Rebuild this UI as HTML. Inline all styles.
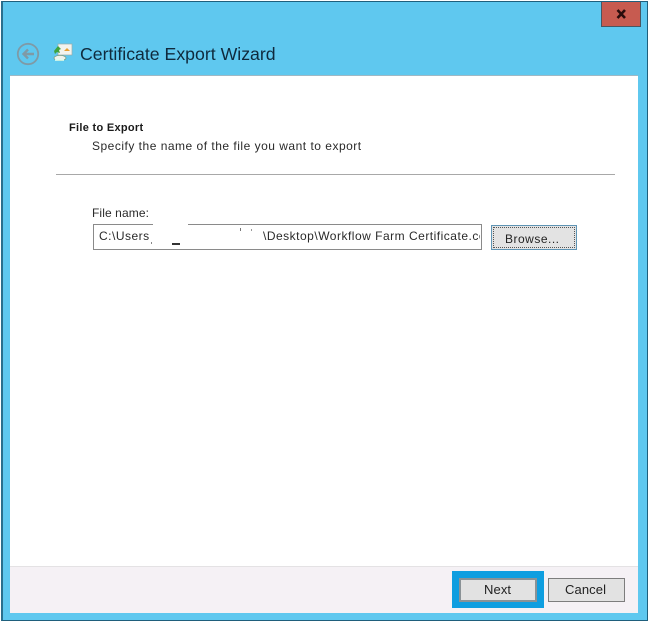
<!DOCTYPE html>
<html>
<head>
<meta charset="utf-8">
<style>
html,body{margin:0;padding:0;}
body{width:650px;height:623px;position:relative;overflow:hidden;background:#fff;font-family:"Liberation Sans",sans-serif;color:#222;}
div{position:absolute;box-sizing:border-box;white-space:nowrap;}
.t{font-size:12px;line-height:14px;letter-spacing:.5px;}
</style>
</head>
<body>
<div style="left:1px;top:1px;width:647px;height:620px;background:#5fc8ef;border:1px solid #1f5f7c;border-left:2px solid #2a6f8e;"></div>
<div style="left:601px;top:2px;width:40px;height:25px;background:#c75b50;border:1px solid #4a5560;border-top:0;"></div>
<svg style="position:absolute;left:615px;top:8px" width="13" height="12" viewBox="0 0 13 12"><path d="M2.5 2L10 10M10 2L2.5 10" stroke="#2a0c0c" stroke-width="2.6" fill="none"/></svg>

<svg style="position:absolute;left:15px;top:41px" width="26" height="26" viewBox="0 0 26 26"><circle cx="13" cy="13" r="10.2" fill="none" stroke="#7f9aa6" stroke-width="1.8"/><path d="M19 13H9M13 8.5L8.5 13L13 17.5" fill="none" stroke="#7f9aa6" stroke-width="2.4"/></svg>
<svg style="position:absolute;left:52px;top:42px" width="22" height="22" viewBox="0 0 22 22"><rect x="6" y="2" width="14" height="11" fill="#f3f3ee" stroke="#9aa" stroke-width=".7"/><path d="M12 9l3-3 3 3z" fill="#e8a032"/><path d="M6 4l3 3-2 1 1 3-3-1-2 2-1-3z" fill="#3fa33f"/><ellipse cx="8" cy="16" rx="6" ry="2.6" fill="#eef3ee" stroke="#7a9a7a" stroke-width=".7"/><path d="M3 18h9" stroke="#dfe" stroke-width="1.6"/></svg>
<div style="left:80px;top:43px;font-size:17.7px;line-height:22px;color:#0f2a3d;">Certificate Export Wizard</div>

<div style="left:10px;top:75px;width:628px;height:538px;background:#fff;border-top:1px solid #9fb8c4;"></div>
<div style="left:10px;top:566px;width:628px;height:47px;background:#f5f1f5;border-top:1px solid #e4e2e4;"></div>

<div class="t" style="left:69px;top:121px;font-size:11px;font-weight:bold;color:#1a1a1a;letter-spacing:.3px;">File to Export</div>
<div class="t" style="left:92px;top:139px;color:#2a2a2a;">Specify the name of the file you want to export</div>
<div style="left:56px;top:174px;width:559px;height:1px;background:#a8a8a8;"></div>

<div class="t" style="left:92px;top:206px;color:#2a2a2a;letter-spacing:.1px;">File name:</div>
<div style="left:93px;top:224px;width:389px;height:26px;background:#fff;border:1px solid #8a8a8a;"></div>
<div style="left:153px;top:222px;width:35px;height:5px;background:#fff;"></div>
<div class="t" style="left:99px;top:229px;color:#2a2a2a;">C:\Users</div>
<div style="left:172px;top:243px;width:8px;height:2px;background:#333;"></div>
<div style="left:151px;top:242px;width:1px;height:2px;background:#888;"></div>
<div style="left:240px;top:228px;width:1px;height:3px;background:#777;"></div>
<div style="left:251px;top:229px;width:1px;height:2px;background:#999;"></div>
<div class="t" style="left:263px;top:229px;width:217px;overflow:hidden;color:#2a2a2a;">\Desktop\Workflow Farm Certificate.cer</div>

<div style="left:491px;top:225px;width:86px;height:25px;background:#e3e3e3;border:1px solid #5f95b5;"></div>
<div style="left:493px;top:227px;width:82px;height:21px;border:1px dotted #555;"></div>
<div class="t" style="left:505px;top:232px;color:#222;">Browse...</div>

<div style="left:452px;top:571px;width:92px;height:37px;background:#0f9ee0;"></div>
<div style="left:459px;top:578px;width:78px;height:24px;background:#e2e2e2;border:2px solid #8a9296;"></div>
<div class="t" style="left:484px;top:583px;font-size:13px;color:#222;letter-spacing:.1px;">Next</div>
<div style="left:548px;top:578px;width:77px;height:24px;background:#e2e2e2;border:1px solid #7d7d7d;"></div>
<div class="t" style="left:565px;top:583px;font-size:13px;color:#222;letter-spacing:.1px;">Cancel</div>
</body>
</html>
